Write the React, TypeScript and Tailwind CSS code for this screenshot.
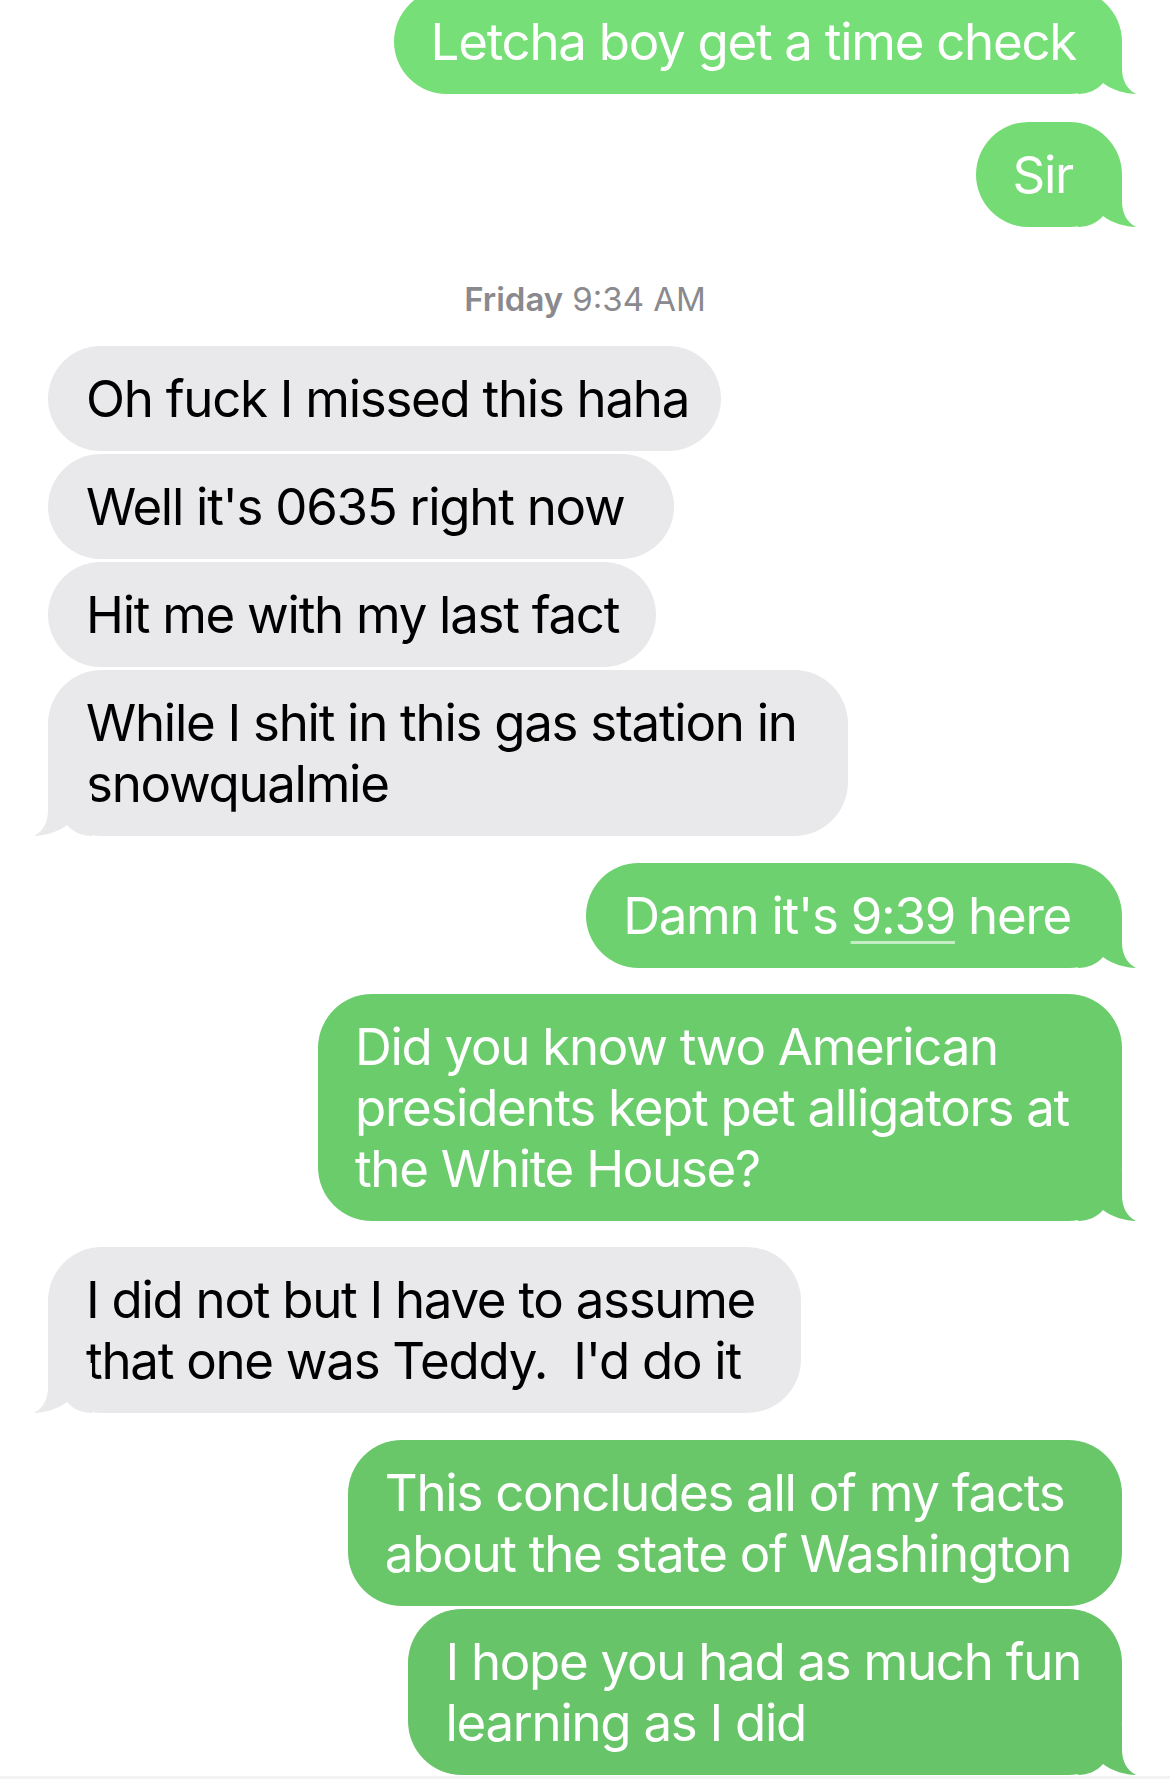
import React from "react";

type Msg = {
  lines: React.ReactNode[];
  tail?: boolean;
  bg?: string;
  pr?: string;
};

function Tail({ color, side }: { color: string; side: "left" | "right" }) {
  return (
    <svg
      width="60"
      height="50"
      viewBox="0 0 60 50"
      className={
        side === "right"
          ? "absolute bottom-0 -right-[16px]"
          : "absolute bottom-0 -left-[16px] -scale-x-100"
      }
    >
      <path
        d="M0 0 H44 V24 C44 37 49 45 58 50 C48 50 34 46 25 39 C19 46 10 50 0 50 Z"
        fill={color}
      />
    </svg>
  );
}

function Sent({ lines, tail, bg = "#6ccd6d", pr = "pr-[51px]" }: Msg) {
  return (
    <div className="flex justify-end pr-[48px]">
      <div
        className={`relative rounded-[54px] pl-[37px] ${pr} py-[22px] text-white`}
        style={{ backgroundColor: bg }}
      >
        <div className="whitespace-nowrap">
          {lines.map((l, i) => (
            <div key={i}>{l}</div>
          ))}
        </div>
        {tail && <Tail color={bg} side="right" />}
      </div>
    </div>
  );
}

function Received({ lines, tail, pr = "pr-[37px]" }: Msg) {
  return (
    <div className="flex justify-start pl-[48px]">
      <div
        className={`relative rounded-[54px] bg-[#e9e9eb] pl-[38px] ${pr} py-[22px] text-black`}
      >
        <div className="whitespace-nowrap">
          {lines.map((l, i) => (
            <div key={i}>{l}</div>
          ))}
        </div>
        {tail && <Tail color="#e9e9eb" side="left" />}
      </div>
    </div>
  );
}

export default function App() {
  return (
    <div
      className="w-[1170px] h-[1779px] overflow-hidden bg-white flex flex-col text-[51px] leading-[61px] tracking-[-0.025em]"
      style={{ fontFamily: "Inter, 'Noto Sans', sans-serif" }}
    >
      <div className="-mt-[11px] flex flex-col">
        <Sent lines={["Letcha boy get a time check"]} tail bg="#77df77" pr="pr-[46px]" />
        <div className="mt-[28px]">
          <Sent lines={["Sir"]} tail bg="#75dc75" pr="pr-[49px]" />
        </div>
      </div>

      {/* timestamp */}
      <div className="mt-[52px] mb-[27px] h-[40px] flex items-center justify-center text-[33px] leading-[40px] tracking-normal text-[#8a8a8e]">
        <span className="font-semibold">Friday</span>
        <span className="ml-[9px]">9:34 AM</span>
      </div>

      <div className="flex flex-col gap-[3px]">
        <Received lines={["Oh fuck I missed this haha"]} pr="pr-[32px]" />
        <Received lines={["Well it's 0635 right now"]} pr="pr-[50px]" />
        <Received lines={["Hit me with my last fact"]} />
        <Received
          lines={["While I shit in this gas station in", "snowqualmie"]}
          tail
          pr="pr-[51px]"
        />
      </div>

      <div className="mt-[27px]">
        <Sent
          lines={[
            <span>
              Damn it's{" "}
              <span className="underline decoration-white/60 decoration-[3px] underline-offset-[7px]">
                9:39
              </span>{" "}
              here
            </span>,
          ]}
          tail
          bg="#6ed16f"
        />
      </div>

      <div className="mt-[26px]">
        <Sent
          lines={[
            "Did you know two American",
            "presidents kept pet alligators at",
            "the White House?",
          ]}
          tail
          bg="#6bcc6c"
          pr="pr-[53px]"
        />
      </div>

      <div className="mt-[26px]">
        <Received
          lines={["I did not but I have to assume", "that one was Teddy.\u00a0 I'd do it"]}
          tail
          pr="pr-[46px]"
        />
      </div>

      <div className="mt-[27px] flex flex-col gap-[3px]">
        <Sent
          lines={["This concludes all of my facts", "about the state of Washington"]}
          bg="#69c76a"
        />
        <Sent
          lines={["I hope you had as much fun", "learning as I did"]}
          tail
          bg="#67c468"
          pr="pr-[41px]"
        />
      </div>

      <div className="mt-auto h-[3px] bg-[#f3f3f3]" />
    </div>
  );
}
